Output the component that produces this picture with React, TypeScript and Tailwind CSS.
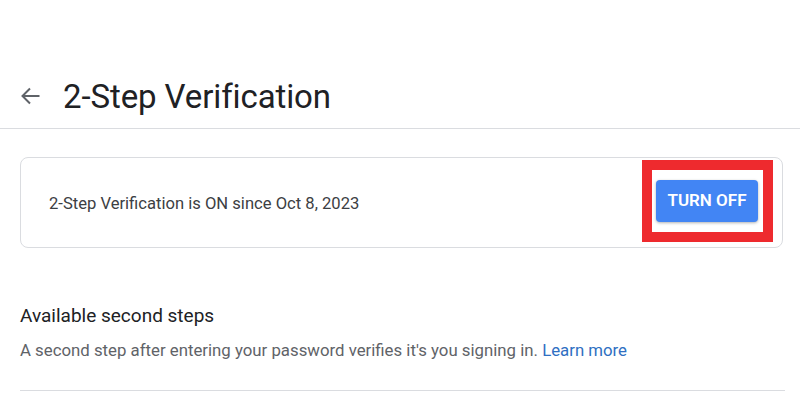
export default function App() {
  return (
    <div className="w-[800px] h-[400px] bg-white overflow-hidden font-['Roboto',sans-serif]">
      <div className="flex items-center h-[129px] pt-[64px] pl-[20px] border-b border-[#dadce0]">
        <svg width="20" height="18" viewBox="0 0 20 18" className="shrink-0" fill="none" stroke="#5f6368" strokeWidth="2">
          <path d="M19.5 9H2.5M10 1.5L2.5 9l7.5 7.5" />
        </svg>
        <h1 className="ml-[23px] text-[33px] leading-none text-[#202124] tracking-[-0.1px]">
          2-Step Verification
        </h1>
      </div>

      <div className="ml-[20px] mr-[17px] mt-[28px] h-[91px] border border-[#dadce0] rounded-lg flex items-center pl-[28px] pr-[9px]">
        <span className="mt-[3px] text-[16.6px] text-[#3c4043]">2-Step Verification is ON since Oct 8, 2023</span>
        <div className="ml-auto -mt-[4px] border-[10px] border-[#ee2a2e] pl-[4px] pr-[5px] py-[10px]">
          <button className="w-[102px] h-[42px] rounded bg-[#4285f4] text-white text-[17px] font-semibold shadow-[0_1px_3px_rgba(60,64,67,0.4)]">
            TURN OFF
          </button>
        </div>
      </div>

      <div className="px-[20px] pt-[56px]">
        <h2 className="text-[19px] leading-[23px] text-[#202124]">Available second steps</h2>
        <p className="mt-[12px] text-[16.8px] leading-[23px] text-[#5f6368]">
          A second step after entering your password verifies it's you signing in.{" "}
          <a className="text-[#2f6fc2]">Learn more</a>
        </p>
        <div className="mt-[28px] mr-[-5px] border-b border-[#dadce0]" />
      </div>
    </div>
  );
}
